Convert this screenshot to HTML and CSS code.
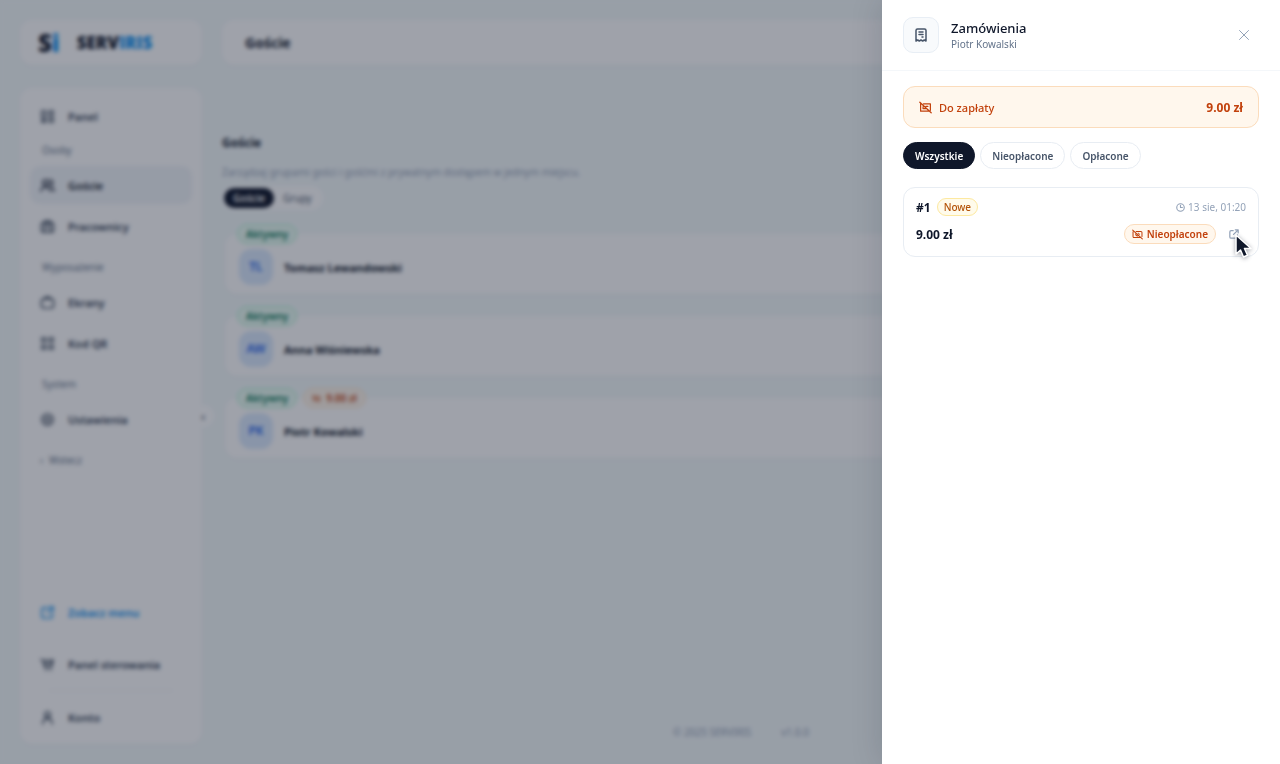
FILE: index.html
```html
<!DOCTYPE html>
<html lang="pl">
<head>
  <meta charset="UTF-8">
  <meta name="viewport" content="width=device-width, initial-scale=1.0">
  <title>Serviris - Goście</title>
  <link rel="stylesheet" href="styles.css">
</head>
<body>

  <div class="app">
    <div class="side">
      <a class="brand" href="#"><span class="brand-mark">S<i>i</i></span><span class="brand-name">SERV<i>IRIS</i></span></a>

      <nav class="sidebar">
        <a class="nav-item" href="#"><svg viewBox="0 0 16 16"><rect x="2" y="2" width="4" height="7"/><rect x="10" y="2" width="4" height="4"/><rect x="2" y="12" width="4" height="2"/><rect x="10" y="9" width="4" height="5"/></svg>Panel</a>
        <p class="nav-label">Osoby</p>
        <a class="nav-item active" href="#"><svg viewBox="0 0 16 16"><circle cx="6" cy="5" r="3"/><path d="M1 14v-1c0-2 2-3 5-3s5 1 5 3v1M10.500 2a3 3 0 0 1 0 6M12.500 10.500c2 .5 2.500 1.500 2.500 3.500"/></svg>Goście</a>
        <a class="nav-item" href="#"><svg viewBox="0 0 16 16"><rect x="1.500" y="4" width="13" height="10" rx="2"/><path d="M5 4V2h6v2M5 4v10M11 4v10M7 8h2"/></svg>Pracownicy</a>
        <p class="nav-label spaced">Wyposażenie</p>
        <a class="nav-item" href="#"><svg viewBox="0 0 16 16"><rect x="1.500" y="4" width="13" height="10" rx="3"/><path d="M5 4l1-2h4l1 2"/></svg>Ekrany</a>
        <a class="nav-item" href="#"><svg viewBox="0 0 16 16"><rect x="2" y="2" width="4" height="4"/><rect x="10" y="2" width="4" height="4"/><rect x="2" y="10" width="4" height="4"/><rect x="10" y="10" width="4" height="4"/></svg>Kod QR</a>
        <p class="nav-label spaced">System</p>
        <a class="nav-item" href="#"><svg viewBox="0 0 16 16"><circle cx="8" cy="8" r="6"/><circle cx="8" cy="8" r="2.500"/></svg>Ustawienia</a>
        <a class="nav-back" href="#"><span>‹</span>Wstecz</a>

        <div class="nav-bottom">
          <a class="nav-item link" href="#"><svg viewBox="0 0 16 16"><path d="M8 3H4a2 2 0 0 0-2 2v7a2 2 0 0 0 2 2h7a2 2 0 0 0 2-2V8M10 2h4v4M14 2L8 8"/></svg>Zobacz menu</a>
          <a class="nav-item" href="#"><svg viewBox="0 0 16 16"><path d="M1 3h2l2 8h7l2-8M6 3v5M9 3v5M12 3v5M6 14h1M11 14h1"/></svg>Panel sterowania</a>
          <hr>
          <a class="nav-item" href="#"><svg viewBox="0 0 16 16"><circle cx="8" cy="5" r="3"/><path d="M3 15c0-4 2-6 5-6s5 2 5 6"/></svg>Konto</a>
        </div>
        <button class="collapse" aria-label="Zwiń menu">‹</button>
      </nav>
    </div>

    <main class="main">
      <header class="topbar">Goście</header>

      <section class="guests">
        <h1>Goście</h1>
        <p class="intro">Zarządzaj grupami gości i gośćmi z prywatnym dostępem w jednym miejscu.</p>
        <div class="switch">
          <button class="on">Goście</button>
          <button>Grupy</button>
        </div>

        <div class="guest-list">
          <article class="guest">
            <div class="tags"><span class="tag green">Aktywny</span></div>
            <span class="avatar">TL</span><h2>Tomasz Lewandowski</h2>
          </article>
          <article class="guest">
            <div class="tags"><span class="tag green">Aktywny</span></div>
            <span class="avatar">AW</span><h2>Anna Wiśniewska</h2>
          </article>
          <article class="guest">
            <div class="tags"><span class="tag green">Aktywny</span><span class="tag orange"><svg viewBox="0 0 16 16"><path d="M5 4h9v8M11 12H2V4M1 2l13 12M6 8h4"/></svg>9.00 zł</span></div>
            <span class="avatar">PK</span><h2>Piotr Kowalski</h2>
          </article>
        </div>
      </section>

      <footer class="footer"><span>© 2025 SERVIRIS</span><span>v1.0.0</span></footer>
    </main>
  </div>

  <div class="overlay"></div>

  <aside class="drawer" role="dialog" aria-labelledby="drawer-title">
    <header class="drawer-head">
      <span class="drawer-icon"><svg viewBox="0 0 16 16"><path d="M3 14V3.500A1.500 1.500 0 0 1 4.500 2h7A1.500 1.500 0 0 1 13 3.500V14l-1.700-1-1.600 1L8 13l-1.700 1-1.600-1zM6 5h4M6 7.500h4M9 10h1"/></svg></span>
      <div class="drawer-title">
        <h2 id="drawer-title">Zamówienia</h2>
        <p>Piotr Kowalski</p>
      </div>
      <button class="close" aria-label="Zamknij"><svg viewBox="0 0 10 10"><path d="M.5.5l9 9M9.500.5l-9 9"/></svg></button>
    </header>

    <div class="drawer-body">
      <div class="due">
        <svg viewBox="0 0 16 16"><path d="M5.500 3.500H14v8M12 12.500H2v-9M1 1.500l14 13M8.500 6.500H11M5 9.500h4M5 7v2.500"/></svg>
        <span>Do zapłaty</span>
        <strong>9.00 zł</strong>
      </div>

      <div class="filters">
        <button class="on">Wszystkie</button>
        <button>Nieopłacone</button>
        <button>Opłacone</button>
      </div>

      <article class="order">
        <div class="order-row">
          <strong>#1</strong>
          <span class="badge new">Nowe</span>
          <time><svg viewBox="0 0 12 12"><circle cx="6" cy="6" r="5"/><path d="M6 3v3h2.500"/></svg>13 sie, 01:20</time>
        </div>
        <div class="order-row second">
          <strong>9.00 zł</strong>
          <span class="badge unpaid"><svg viewBox="0 0 16 16"><path d="M6 3.500h7A1.500 1.500 0 0 1 14.500 5v6M12 12.500H3A1.500 1.500 0 0 1 1.500 11V4M1 1.500l14 13M9 6a2 2 0 0 1 1.500 2M5.500 7a2.500 2.500 0 0 0 3 3"/></svg>Nieopłacone</span>
          <a class="open" href="#" aria-label="Otwórz zamówienie">
            <svg viewBox="0 0 12 12"><path d="M5 2H2.500A1.500 1.500 0 0 0 1 3.500v6A1.500 1.500 0 0 0 2.500 11h6A1.500 1.500 0 0 0 10 9.500V7M7.500 1H11v3.500M11 1L5.500 6.500"/></svg>
            <svg class="pointer" viewBox="0 0 18 26"><path d="M2 2v19l4.500-4 3 7 4-1.700-3-6.800H17z"/></svg>
          </a>
        </div>
      </article>
    </div>
  </aside>

</body>
</html>
```
FILE: styles.css
```css
* {
  box-sizing: border-box;
}

body {
  margin: 0;
  font-family: "Noto Sans", "Open Sans", sans-serif;
  font-size: 12px;
  color: #0f172a;
  background: #f4fafb;
}

h1, h2, p {
  margin: 0;
}

a {
  color: inherit;
  text-decoration: none;
}

button {
  font-family: inherit;
  cursor: pointer;
}

svg {
  fill: none;
  stroke: currentColor;
  stroke-width: 1.5;
  stroke-linecap: round;
  stroke-linejoin: round;
  flex: none;
}

/* page */
.app {
  display: flex;
  gap: 20px;
  min-height: 100vh;
  padding: 20px;
}

.side {
  display: flex;
  flex-direction: column;
  gap: 23px;
  width: 182px;
}

.brand, .topbar, .sidebar {
  background: #fff;
  border-radius: 12px;
  box-shadow: 0 1px 3px rgba(15, 23, 42, 0.04);
}

.brand {
  display: flex;
  align-items: center;
  gap: 17px;
  height: 45px;
  padding: 0 18px;
  font-weight: 800;
}

.brand i {
  color: #0e8ff0;
  font-style: normal;
}

.brand-mark {
  font-size: 24px;
  font-weight: 900;
}

.brand-name {
  font-family: "Open Sans", sans-serif;
  font-size: 17px;
}

.sidebar {
  position: relative;
  display: flex;
  flex-direction: column;
  flex: 1;
  gap: 3px;
  padding: 9px 10px 8px;
}

.nav-item {
  display: flex;
  align-items: center;
  gap: 13px;
  height: 38px;
  padding: 0 10px;
  border-radius: 10px;
  font-size: 11px;
  font-weight: 600;
  color: #334155;
}

.nav-item svg {
  width: 15px;
  height: 15px;
}

.nav-item.active {
  background: #f1f5f9;
  color: #0f172a;
}

.nav-item.link {
  color: #0e8ff0;
}

.nav-label {
  padding-left: 12px;
  font-size: 10px;
  line-height: 25px;
  color: #64748b;
}

.nav-label.spaced {
  padding-top: 7px;
}

.nav-back {
  display: flex;
  gap: 6px;
  padding-left: 10px;
  font-size: 10px;
  line-height: 38px;
  color: #64748b;
}

.nav-bottom {
  display: flex;
  flex-direction: column;
  gap: 14px;
  margin-top: auto;
}

.nav-bottom hr {
  width: 75%;
  margin: -7px auto;
  border: 0;
  border-top: 1px solid #f1f5f9;
}

.collapse {
  position: absolute;
  top: 317px;
  right: -12px;
  width: 22px;
  height: 22px;
  padding: 0;
  border: 0;
  border-radius: 50%;
  background: #fff;
  color: #334155;
}

.main {
  display: flex;
  flex-direction: column;
  flex: 1;
}

.topbar {
  height: 45px;
  padding-left: 23px;
  font-size: 14px;
  font-weight: 700;
  line-height: 45px;
}

.guests {
  padding-top: 68px;
}

.guests h1 {
  font-size: 12px;
  line-height: 20px;
}

.intro {
  padding-top: 9px;
  font-size: 10px;
  line-height: 20px;
  color: #94a3b8;
}

.switch {
  display: flex;
  width: fit-content;
  margin-top: 4px;
  padding: 2px;
  border-radius: 12px;
  background: #fff;
}

.switch button {
  height: 20px;
  padding: 0 9px;
  border: 0;
  border-radius: 10px;
  background: none;
  font-size: 10px;
  color: #475569;
}

.switch button.on {
  background: #0f172a;
  color: #fff;
  font-weight: 600;
}

.guest-list {
  display: flex;
  flex-direction: column;
  gap: 22px;
  padding: 24px 3px 0;
}

.guest {
  position: relative;
  display: flex;
  align-items: center;
  gap: 11px;
  height: 60px;
  padding: 6px 14px 0;
  border-radius: 12px;
  background: #fff;
  box-shadow: 0 1px 3px rgba(15, 23, 42, 0.04);
}

.guest h2 {
  font-size: 11px;
}

.tags {
  position: absolute;
  top: -10px;
  left: 12px;
  display: flex;
  gap: 6px;
}

.tag {
  display: flex;
  align-items: center;
  gap: 5px;
  height: 20px;
  padding: 0 8px;
  border: 1px solid;
  border-radius: 10px;
  font-size: 10px;
  font-weight: 600;
}

.tag svg {
  width: 9px;
  height: 9px;
}

.tag.green {
  border-color: #a7f3d0;
  background: #ecfdf5;
  color: #047857;
}

.tag.orange {
  border-color: #ffe4c4;
  background: #fff7ed;
  color: #c2410c;
}

.avatar {
  width: 34px;
  height: 36px;
  border-radius: 12px;
  background: #dbeafe;
  color: #2563eb;
  font-weight: 600;
  line-height: 36px;
  text-align: center;
}

.footer {
  display: flex;
  justify-content: center;
  gap: 30px;
  margin-top: auto;
  padding-bottom: 4px;
  font-size: 10px;
  line-height: 16px;
  color: #94a3b8;
}

.overlay {
  position: fixed;
  inset: 0;
  background: rgba(15, 23, 42, 0.4);
  backdrop-filter: blur(2px);
}

/* orders drawer */
.drawer {
  position: fixed;
  top: 0;
  right: 0;
  bottom: 0;
  width: 398px;
  max-width: 100%;
  background: #fff;
  box-shadow: 0 0 30px rgba(15, 23, 42, 0.15);
}

.drawer-head {
  display: flex;
  align-items: center;
  gap: 12px;
  padding: 17px 21px;
  border-bottom: 1px solid #f4f7fa;
}

.drawer-icon {
  display: grid;
  place-items: center;
  width: 36px;
  height: 36px;
  border: 1px solid #e8eef5;
  border-radius: 10px;
  background: #f8fafc;
  color: #475569;
}

.drawer-icon svg {
  width: 16px;
  height: 16px;
}

.drawer-title {
  flex: 1;
}

.drawer-title h2 {
  font-size: 13px;
  font-weight: 500;
  line-height: 18px;
}

.drawer-title p {
  font-size: 10px;
  line-height: 14px;
  color: #64748b;
}

.close {
  display: grid;
  place-items: center;
  width: 30px;
  height: 30px;
  padding: 0;
  border: 0;
  background: none;
  color: #94a3b8;
}

.close svg {
  width: 10px;
  height: 10px;
  stroke-width: 1;
}

.drawer-body {
  padding: 15px 21px;
}

.due {
  display: flex;
  align-items: center;
  gap: 7px;
  height: 42px;
  padding: 0 15px;
  border: 1px solid #fbdcbc;
  border-radius: 12px;
  background: #fff7ed;
  color: #c2410c;
  font-size: 11px;
  font-weight: 500;
}

.due svg {
  width: 13px;
  height: 13px;
}

.due strong {
  margin-left: auto;
  font-size: 12px;
}

.filters {
  display: flex;
  gap: 5px;
  margin: 14px 0 18px;
}

.filters button {
  height: 27px;
  padding: 0 11px;
  border: 1px solid #e8edf3;
  border-radius: 14px;
  background: #fff;
  color: #475569;
  font-size: 10px;
  font-weight: 600;
}

.filters button.on {
  border-color: #0f172a;
  background: #0f172a;
  color: #fff;
}

.order {
  padding: 10px 12px;
  border: 1px solid #e8edf3;
  border-radius: 12px;
}

.order-row {
  display: flex;
  align-items: center;
  gap: 6px;
}

.order-row.second {
  margin-top: 6px;
}

.badge {
  display: flex;
  align-items: center;
  gap: 4px;
  height: 18px;
  padding: 0 6px;
  border: 1px solid;
  border-radius: 10px;
  font-size: 10px;
  font-weight: 600;
}

.badge.new {
  border-color: #fde9a0;
  background: #fffbeb;
  color: #b45309;
  font-weight: 500;
}

.badge.unpaid {
  height: 20px;
  margin-left: auto;
  padding: 0 7px;
  border-color: #fbdcbc;
  background: #fff7ed;
  color: #c2410c;
}

.badge svg {
  width: 11px;
  height: 11px;
}

.order-row time {
  display: flex;
  align-items: center;
  gap: 3px;
  margin-left: auto;
  font-size: 10px;
  color: #94a3b8;
}

time svg {
  width: 9px;
  height: 9px;
}

.open {
  position: relative;
  display: grid;
  place-items: center;
  width: 24px;
  height: 24px;
  color: #94a3b8;
}

.open svg {
  width: 10px;
  height: 10px;
}

.open .pointer {
  position: absolute;
  top: 11px;
  left: 12px;
  width: 18px;
  height: 26px;
  fill: #0f172a;
  stroke: #fff;
  filter: drop-shadow(0 1px 2px rgba(15, 23, 42, 0.4));
}
```
